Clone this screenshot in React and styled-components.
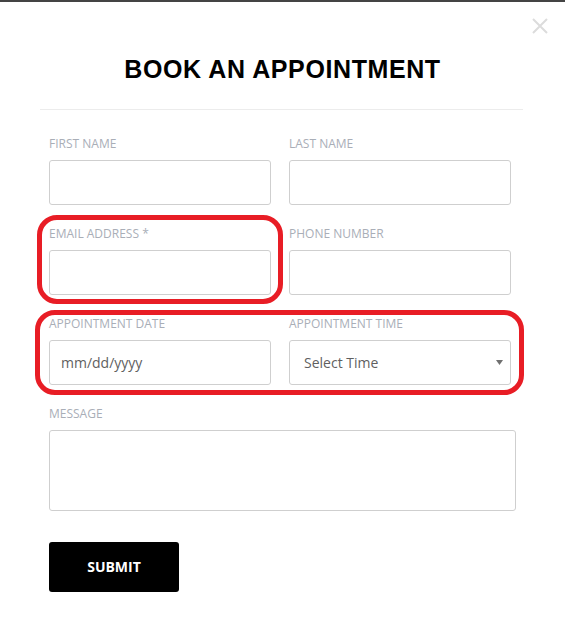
import styled, { createGlobalStyle } from "styled-components";

const GlobalStyle = createGlobalStyle`
  html, body {
    margin: 0;
    padding: 0;
    background: #fff;
  }
  body {
    font-family: "Open Sans", "Liberation Sans", sans-serif;
  }
`;

function App() {
  return (
    <>
      <GlobalStyle />
      <Modal>
        <CloseButton aria-label="Close">
          <svg width="16" height="16" viewBox="0 0 16 16">
            <path d="M1 1 L15 15 M15 1 L1 15" stroke="#dcdcdc" strokeWidth="2" fill="none" />
          </svg>
        </CloseButton>
        <Title>BOOK AN APPOINTMENT</Title>
        <Divider />
        <Form>
          <Row>
            <Field>
              <Label>First Name</Label>
              <Input type="text" />
            </Field>
            <Field>
              <Label>Last Name</Label>
              <Input type="text" />
            </Field>
          </Row>
          <Row>
            <Field>
              <Label>Email Address *</Label>
              <Input type="email" />
            </Field>
            <Field>
              <Label>Phone Number</Label>
              <Input type="tel" />
            </Field>
          </Row>
          <Row>
            <Field>
              <Label>Appointment Date</Label>
              <Input type="text" placeholder="mm/dd/yyyy" $pad={11} />
            </Field>
            <Field>
              <Label>Appointment Time</Label>
              <SelectBox>
                <Select defaultValue="">
                  <option value="">Select Time</option>
                  <option>9:00 AM</option>
                  <option>10:00 AM</option>
                  <option>11:00 AM</option>
                </Select>
                <Caret width="7" height="5" viewBox="0 0 7 5">
                  <path d="M0 0 H7 L3.5 5 Z" fill="#707070" />
                </Caret>
              </SelectBox>
            </Field>
          </Row>
          <Field $wide>
            <Label>Message</Label>
            <TextArea />
          </Field>
          <SubmitButton type="submit">SUBMIT</SubmitButton>
        </Form>
        <Highlight style={{ left: 37, top: 213, width: 246, height: 89 }} />
        <Highlight style={{ left: 35, top: 308, width: 489, height: 85 }} />
      </Modal>
    </>
  );
}

let Modal = styled.div`
  position: relative;
  width: 565px;
  height: 634px;
  box-sizing: border-box;
  border-top: 2px solid #444;
  background: #fff;
  overflow: hidden;
`;

let CloseButton = styled.button`
  position: absolute;
  top: 16px;
  right: 17px;
  width: 16px;
  height: 16px;
  padding: 0;
  border: 0;
  background: none;
  display: flex;
`;

let Title = styled.h2`
  margin: 0;
  padding-top: 52px;
  font-family: "Liberation Sans", "Open Sans", sans-serif;
  font-weight: 700;
  font-size: 25px;
  line-height: 30px;
  letter-spacing: 0.6px;
  color: #000;
  text-align: center;
`;

let Divider = styled.div`
  height: 1px;
  margin: 25px 42px 0 40px;
  background: #ececec;
`;

let Form = styled.form`
  display: flex;
  flex-direction: column;
  align-items: flex-start;
  gap: 18px;
  padding: 23px 0 0 49px;
`;

let Row = styled.div`
  display: flex;
  gap: 18px;
`;

let Field = styled.div`
  display: flex;
  flex-direction: column;
  width: ${({ $wide }) => ($wide ? "467px" : "222px")};
`;

let Label = styled.label`
  font-size: 12px;
  line-height: 18px;
  text-transform: uppercase;
  color: #a9aeb7;
  margin: 2px 0 7px;
`;

let Input = styled.input`
  box-sizing: border-box;
  height: 45px;
  width: 100%;
  padding: 0 ${({ $pad }) => $pad ?? 14}px;
  border: 1px solid #cfcfcf;
  border-radius: 3px;
  font-family: "Open Sans", sans-serif;
  font-size: 14px;
  color: #555;
  outline: none;

  &::placeholder {
    color: #5f5f5f;
  }
`;

let SelectBox = styled.div`
  position: relative;
  height: 45px;
`;

let Select = styled.select`
  appearance: none;
  box-sizing: border-box;
  width: 100%;
  height: 45px;
  padding: 0 14px;
  border: 1px solid #cfcfcf;
  border-radius: 3px;
  background: #fff;
  font-family: "Open Sans", sans-serif;
  font-size: 14px;
  color: #5f5f5f;
  outline: none;
`;

let Caret = styled.svg`
  position: absolute;
  right: 8px;
  top: 20px;
  pointer-events: none;
`;

let TextArea = styled.textarea`
  box-sizing: border-box;
  width: 100%;
  height: 81px;
  border: 1px solid #cfcfcf;
  border-radius: 3px;
  resize: none;
  outline: none;
  font-family: "Open Sans", sans-serif;
`;

let SubmitButton = styled.button`
  margin-top: 13px;
  width: 130px;
  height: 50px;
  padding: 0 0 2px;
  border: 0;
  border-radius: 3px;
  background: #000;
  color: #fff;
  font-family: "Open Sans", sans-serif;
  font-weight: 700;
  font-size: 14px;
  cursor: pointer;
`;

let Highlight = styled.div`
  position: absolute;
  box-sizing: border-box;
  border: 5px solid #e81d25;
  border-radius: 20px;
  pointer-events: none;
`;

export default App;
